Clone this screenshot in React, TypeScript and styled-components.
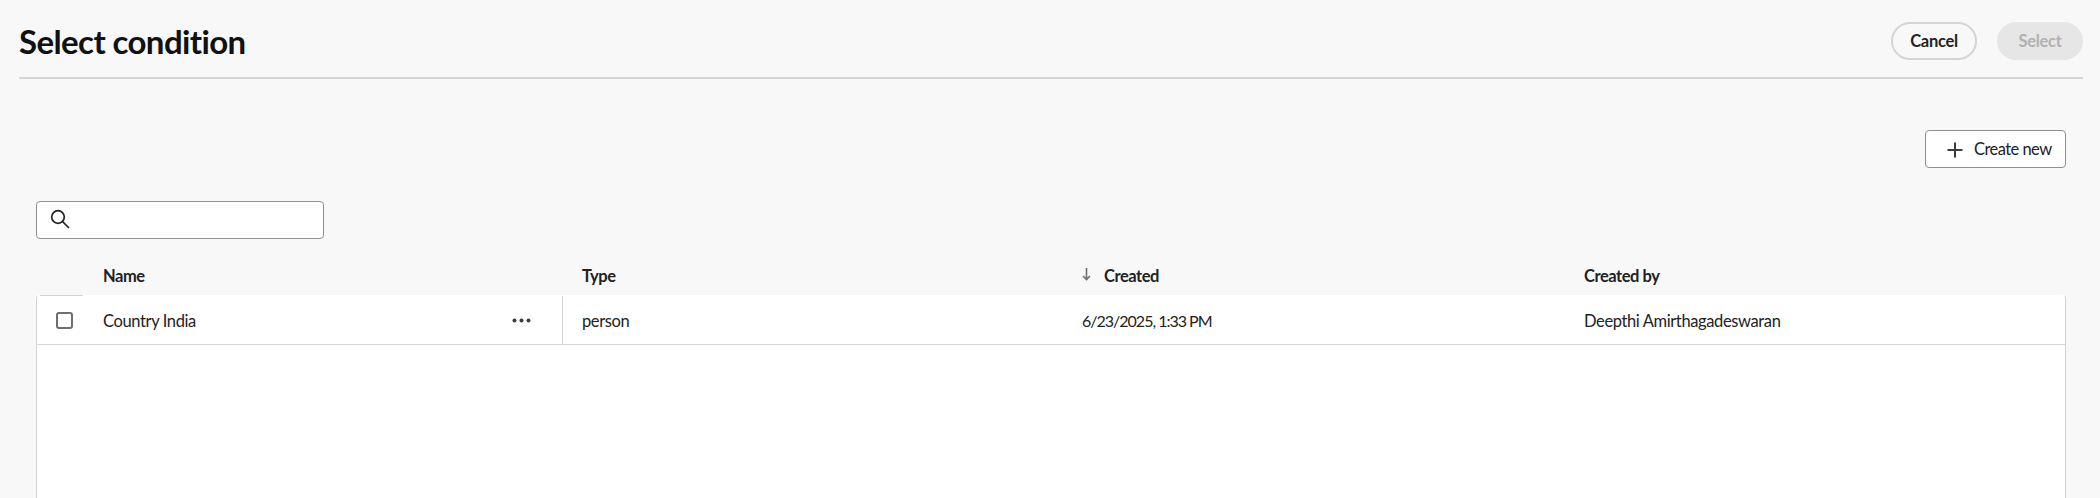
import styled, { createGlobalStyle, css } from "styled-components"

const GlobalStyle = createGlobalStyle`
  html, body {
    margin: 0;
    height: 100%;
    overflow: hidden;
    background: #f8f8f8;
    font-family: "Lato", "Open Sans", sans-serif;
    color: #222;
  }
  * { box-sizing: border-box; }
`

const columns = css`
  display: grid;
  grid-template-columns: 66px 460px 500px 502px 1fr;
`

const Header = styled.header`
  display: flex;
  align-items: flex-start;
  justify-content: space-between;
  height: 79px;
  margin: 0 17px 0 19px;
  padding-top: 22px;
  border-bottom: 2px solid #d5d5d5;
`

const Title = styled.h1`
  margin: 0;
  font-size: 33px;
  line-height: 38px;
  font-weight: 700;
  letter-spacing: -0.6px;
  color: #111;
`

const HeaderActions = styled.div`
  display: flex;
  gap: 20px;
`

const PillButton = styled.button<{ $disabled?: boolean }>`
  width: 86px;
  height: 38px;
  border-radius: 19px;
  font: 700 16.5px/1 "Lato", sans-serif;
  letter-spacing: -0.3px;
  border: 2px solid ${(p) => (p.$disabled ? "#e6e6e6" : "#d5d5d5")};
  background: ${(p) => (p.$disabled ? "#e6e6e6" : "transparent")};
  color: ${(p) => (p.$disabled ? "#b1b1b1" : "#222")};
  padding: 0;
`

const Content = styled.main`
  padding: 51px 34px 0 36px;
`

const Toolbar = styled.div`
  display: flex;
  justify-content: flex-end;
`

const CreateButton = styled.button`
  display: flex;
  align-items: center;
  gap: 11px;
  width: 141px;
  height: 38px;
  padding: 1px 0 0 21px;
  background: #fff;
  border: 1px solid #8f8f8f;
  border-radius: 4px;
  font: 400 16.5px/1 "Lato", sans-serif;
  letter-spacing: -0.55px;
  color: #222;
`

const SearchBox = styled.div`
  display: flex;
  align-items: center;
  width: 288px;
  height: 38px;
  margin-top: 33px;
  padding: 0 0 2px 13px;
  background: #fff;
  border: 1px solid #8f8f8f;
  border-radius: 4px;
`

const HeadRow = styled.div`
  ${columns}
  height: 56px;
  padding: 28px 0 0 1px;
`

const HeadCell = styled.div<{ $pad?: number }>`
  display: flex;
  align-items: flex-start;
  gap: 13px;
  padding-left: ${(p) => p.$pad ?? 0}px;
  font-size: 16.5px;
  line-height: 18px;
  font-weight: 700;
  letter-spacing: -0.45px;
  color: #222;
`

const Card = styled.section`
  position: relative;
  height: 203px;
  background: #fff;
  border: 1px solid #d5d5d5;
  border-top-color: #fff;
  border-bottom: none;
  border-radius: 4px 4px 0 0;

  &::before {
    content: "";
    position: absolute;
    top: -1px;
    left: 3px;
    width: 43px;
    height: 1px;
    background: #d5d5d5;
  }
`

const Row = styled.div`
  ${columns}
  height: 49px;
  border-bottom: 1px solid #d5d5d5;
  font-size: 16.5px;
  letter-spacing: -0.38px;
`

const CheckCell = styled.div`
  display: flex;
  align-items: center;
  padding-left: 19px;
`

const Checkbox = styled.span`
  width: 17px;
  height: 17px;
  border: 2px solid #6e6e6e;
  border-radius: 3px;
  background: #fff;
`

const NameCell = styled.div`
  display: flex;
  align-items: center;
  justify-content: space-between;
  padding: 1px 31px 0 0;
  border-right: 1px solid #d5d5d5;
`

const Cell = styled.div`
  display: flex;
  align-items: center;
  padding: 1px 0 0 19px;
`

const DateCell = styled(Cell)`
  font-size: 16px;
  letter-spacing: -1px;
`

const App = () => {
  return (
    <>
      <GlobalStyle />
      <Header>
        <Title>Select condition</Title>
        <HeaderActions>
          <PillButton>Cancel</PillButton>
          <PillButton $disabled>Select</PillButton>
        </HeaderActions>
      </Header>
      <Content>
        <Toolbar>
          <CreateButton>
            <svg width="16" height="16" viewBox="0 0 16 16" fill="none" stroke="#3c3c3c" strokeWidth="2">
              <path d="M8 0.5V15.5M0.5 8H15.5" />
            </svg>
            Create new
          </CreateButton>
        </Toolbar>
        <SearchBox>
          <svg width="20" height="20" viewBox="0 0 20 20" fill="none" stroke="#222" strokeWidth="1.7">
            <circle cx="8" cy="8" r="6.3" />
            <path d="M12.5 12.5L18.5 18.5" strokeLinecap="round" />
          </svg>
        </SearchBox>
        <HeadRow>
          <div />
          <HeadCell>Name</HeadCell>
          <HeadCell $pad={19}>Type</HeadCell>
          <HeadCell $pad={19}>
            <svg width="9" height="14" viewBox="0 0 9 14" fill="none" stroke="#6e6e6e" strokeWidth="1.6">
              <path d="M4.5 1V12.5M1 9L4.5 12.5L8 9" />
            </svg>
            Created
          </HeadCell>
          <HeadCell $pad={19}>Created by</HeadCell>
        </HeadRow>
        <Card>
          <Row>
            <CheckCell>
              <Checkbox />
            </CheckCell>
            <NameCell>
              Country India
              <svg width="19" height="5" viewBox="0 0 19 5" fill="#3c3c3c">
                <circle cx="2.5" cy="2.5" r="2" />
                <circle cx="9.5" cy="2.5" r="2" />
                <circle cx="16.5" cy="2.5" r="2" />
              </svg>
            </NameCell>
            <Cell>person</Cell>
            <DateCell>6/23/2025, 1:33 PM</DateCell>
            <Cell>Deepthi Amirthagadeswaran</Cell>
          </Row>
        </Card>
      </Content>
    </>
  )
}

export default App
